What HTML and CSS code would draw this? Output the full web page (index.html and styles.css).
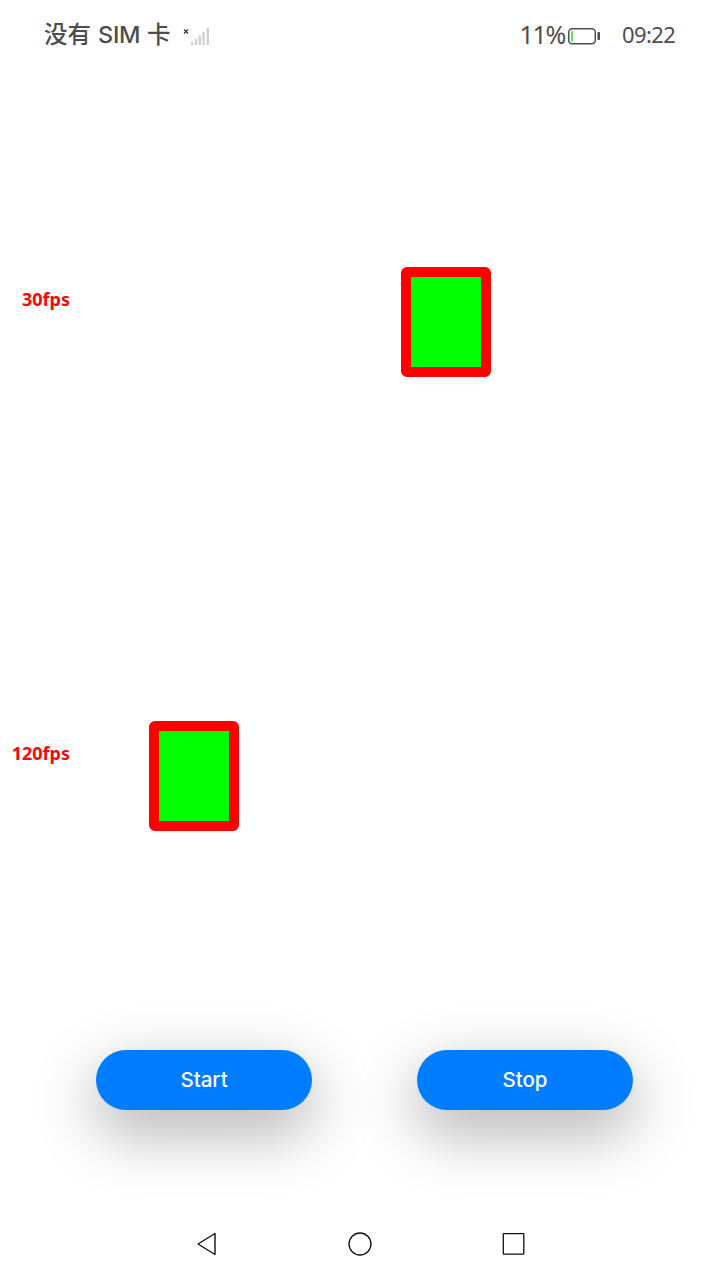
FILE: index.html
```html
<!DOCTYPE html>
<html lang="zh-CN">
<head>
<meta charset="utf-8">
<title>Frame rate</title>
<link rel="stylesheet" href="styles.css">
</head>
<body>
<div class="screen">
  <header class="status">
    <div class="carrier"><span>没有</span><span class="sim">SIM</span><span>卡</span></div>
    <svg class="signal" width="28" height="20" viewBox="0 0 28 20">
      <path d="M2 3.500l4 4M6 3.500l-4 4" stroke="#333" stroke-width="1.2"/>
      <path d="M10.2 16v3M14 13v6M17.8 9.500v9.500M21.500 6v13M25.800 2v17" stroke="#ccc" stroke-width="2.200"/>
    </svg>
    <span class="percent">11%</span>
    <svg class="battery" width="34" height="18" viewBox="0 0 34 18">
      <rect x="1.700" y="1.700" width="26.600" height="15" rx="3.500" fill="none" stroke="#4d4d4d" stroke-width="1.500"/>
      <rect x="4" y="4" width="2" height="10.500" rx=".5" fill="#64da6c"/>
      <rect x="30.500" y="5" width="2.500" height="8" rx=".8" fill="#4d4d4d"/>
    </svg>
    <span class="clock">09:22</span>
  </header>
  <main class="lanes">
    <section class="lane">
      <div class="label">30fps</div>
      <div class="box box-30"></div>
    </section>
    <section class="lane">
      <div class="label">120fps</div>
      <div class="box box-120"></div>
    </section>
  </main>
  <div class="actions">
    <button class="button">Start</button>
    <button class="button">Stop</button>
  </div>
  <nav class="nav">
    <svg width="24" height="26" viewBox="0 0 24 26"><path d="M3 13 20 2.500V23.500Z" fill="none" stroke="#111" stroke-width="1.400" stroke-linejoin="round"/></svg>
    <svg width="24" height="26" viewBox="0 0 24 26"><circle cx="12" cy="13" r="11" fill="none" stroke="#111" stroke-width="1.300"/></svg>
    <svg width="24" height="26" viewBox="0 0 24 26"><rect x="2.300" y="2.700" width="20.500" height="20.500" rx=".5" fill="none" stroke="#111" stroke-width="1.300"/></svg>
  </nav>
</div>
</body>
</html>
```
FILE: styles.css
```css
* { box-sizing: border-box; }
body {
  margin: 0;
  background: #fff;
  font-family: "Noto Sans", "Noto Sans CJK SC", sans-serif;
}
.screen {
  width: 720px;
  height: 1280px;
  display: flex;
  flex-direction: column;
  overflow: hidden;
}
.status {
  height: 71px;
  padding: 0 44px;
  display: flex;
  align-items: center;
  color: #4d4d4d;
  line-height: 30px;
  white-space: nowrap;
}
.carrier {
  display: flex;
  flex: none;
  width: 126px;
  gap: 7px;
  margin-bottom: 4px;
  font-family: "Noto Sans CJK SC", sans-serif;
  font-size: 23.5px;
  font-weight: 500;
}
.sim {
  width: 42px;
  margin-top: 2px;
  font-family: Inter, sans-serif;
  font-size: 23.5px;
  font-weight: 450;
  letter-spacing: -0.3px;
}
.signal { margin-left: 12px; }
.percent {
  margin: 0 0 3px auto;
  font-size: 25px;
  letter-spacing: -1.3px;
}
.battery { margin-left: 2px; }
.clock {
  width: 54px;
  margin: 0 0 3px 21px;
  font-size: 22px;
  letter-spacing: -0.6px;
}
.lanes { height: 908px; }
.lane {
  height: 454px;
  padding-top: 196px;
  display: flex;
  align-items: flex-start;
}
.label {
  width: 70px;
  margin-top: 20px;
  line-height: 24px;
  font-size: 18px;
  font-weight: 700;
  text-align: right;
  color: #f50808;
}
.box {
  width: 90px;
  height: 110px;
  border: 10px solid #f00;
  border-radius: 6px;
  background: #0f0;
}
.box-30 { margin-left: 331px; }
.box-120 { margin-left: 79px; }
.actions {
  height: 229px;
  padding: 71px 87px 0 96px;
  display: flex;
  justify-content: space-between;
}
.button {
  width: 216px;
  height: 60px;
  padding: 0;
  border: 0;
  border-radius: 30px;
  background: #007dff;
  box-shadow: 0 21px 60px 4px rgba(0, 0, 0, .29);
  color: #fff;
  font: 500 20.5px/60px Inter, sans-serif;
}
.nav {
  height: 72px;
  padding: 0 195px;
  display: flex;
  align-items: center;
  justify-content: space-between;
}
```
